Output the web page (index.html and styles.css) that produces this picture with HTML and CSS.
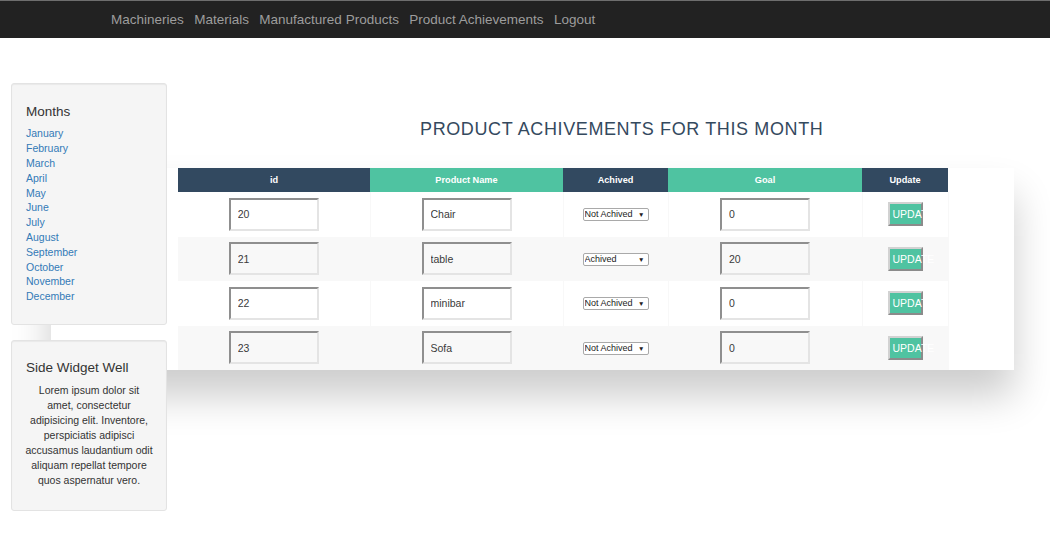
FILE: index.html
```html
<!DOCTYPE html>
<html>
<head>
<meta charset="utf-8">
<title>Product Achievements</title>
<link rel="stylesheet" href="styles.css">
</head>
<body>
<nav class="navbar">
  <ul class="nav">
    <li><a href="#">Machineries</a></li>
    <li><a href="#">Materials</a></li>
    <li><a href="#">Manufactured Products</a></li>
    <li><a href="#">Product Achievements</a></li>
    <li><a href="#">Logout</a></li>
  </ul>
</nav>
<div class="page">
  <aside class="sidebar">
    <div class="well">
      <h4>Months</h4>
      <ul class="months">
        <li><a href="#">January</a></li>
        <li><a href="#">February</a></li>
        <li><a href="#">March</a></li>
        <li><a href="#">April</a></li>
        <li><a href="#">May</a></li>
        <li><a href="#">June</a></li>
        <li><a href="#">July</a></li>
        <li><a href="#">August</a></li>
        <li><a href="#">September</a></li>
        <li><a href="#">October</a></li>
        <li><a href="#">November</a></li>
        <li><a href="#">December</a></li>
      </ul>
    </div>
    <div class="well">
      <h4>Side Widget Well</h4>
      <p>Lorem ipsum dolor sit amet, consectetur adipisicing elit. Inventore, perspiciatis adipisci accusamus laudantium odit aliquam repellat tempore quos aspernatur vero.</p>
    </div>
  </aside>
  <main class="main">
    <h2 class="title">PRODUCT ACHIVEMENTS FOR THIS MONTH</h2>
    <div class="table-wrapper">
      <table class="fl-table">
        <colgroup>
          <col class="c-id"><col class="c-name"><col class="c-ach"><col class="c-goal"><col class="c-upd">
        </colgroup>
        <thead>
          <tr><th>id</th><th>Product Name</th><th>Achived</th><th>Goal</th><th>Update</th></tr>
        </thead>
        <tbody>
          <tr>
            <td><input type="text" value="20"></td>
            <td><input type="text" value="Chair"></td>
            <td><span class="select"><select><option>Not Achived</option><option>Achived</option></select></span></td>
            <td><input type="text" value="0"></td>
            <td><button class="btn">UPDATE</button></td>
          </tr>
          <tr>
            <td><input type="text" value="21"></td>
            <td><input type="text" value="table"></td>
            <td><span class="select"><select><option>Achived</option><option>Not Achived</option></select></span></td>
            <td><input type="text" value="20"></td>
            <td><button class="btn">UPDATE</button></td>
          </tr>
          <tr>
            <td><input type="text" value="22"></td>
            <td><input type="text" value="minibar"></td>
            <td><span class="select"><select><option>Not Achived</option><option>Achived</option></select></span></td>
            <td><input type="text" value="0"></td>
            <td><button class="btn">UPDATE</button></td>
          </tr>
          <tr>
            <td><input type="text" value="23"></td>
            <td><input type="text" value="Sofa"></td>
            <td><span class="select"><select><option>Not Achived</option><option>Achived</option></select></span></td>
            <td><input type="text" value="0"></td>
            <td><button class="btn">UPDATE</button></td>
          </tr>
        </tbody>
      </table>
    </div>
  </main>
</div>
</body>
</html>
```
FILE: styles.css
```css
html, body {
  margin: 0;
  padding: 0;
  background: #ffffff;
}
body {
  font-family: "Liberation Sans", Arial, sans-serif;
  font-size: 10.5px;
  line-height: 15px;
  color: #333333;
}

/* navbar */
.navbar {
  background: #222222;
  border-top: 1px solid #6e6e6e;
  height: 37px;
}
.nav {
  display: flex;
  gap: 10.4px;
  list-style: none;
  margin: 0;
  padding: 0 0 0 111px;
  height: 37px;
  align-items: center;
}
.nav a {
  color: #9d9d9d;
  font-size: 13.5px;
  line-height: 37px;
  text-decoration: none;
}

/* page */
.page {
  display: flex;
  align-items: flex-start;
}
.sidebar {
  flex: none;
  width: 156px;
  margin: 45px 0 0 11px;
  position: relative;
  z-index: 1;
}
.well {
  background: #f5f5f5;
  border: 1px solid #e3e3e3;
  border-radius: 3px;
  padding: 14px;
  margin-bottom: 15px;
  box-shadow: inset 0 1px 1px rgba(0, 0, 0, 0.05);
}
.well h4 {
  font-size: 13.5px;
  font-weight: normal;
  line-height: 14.85px;
  margin: 6.5px 0 7px;
  color: #333333;
}
.months {
  list-style: none;
  padding: 0;
  margin: 0 0 6px;
  line-height: 14.8px;
}
.months a {
  color: #337ab7;
  text-decoration: none;
}
.well p {
  text-align: center;
  margin: 0 -1px 7.5px;
}

/* main */
.main {
  flex: 1;
  min-width: 0;
}
.title {
  margin: 80.5px 0 0 253px;
  font-size: 18px;
  font-weight: normal;
  line-height: 20px;
  letter-spacing: 0.62px;
  color: #34495e;
}
.table-wrapper {
  margin: 29.5px 36px 0 -116px;
  box-shadow: 0 26px 37px rgba(0, 0, 0, 0.2);
}
.fl-table {
  margin-left: 127px;
  width: 770px;
  table-layout: fixed;
  border-collapse: collapse;
  background: #ffffff;
  white-space: nowrap;
  font-size: 10.5px;
}
.c-id { width: 192px; }
.c-name { width: 193px; }
.c-ach { width: 105px; }
.c-goal { width: 194px; }
.c-upd { width: 86px; }

.fl-table th {
  padding: 6px 0;
  line-height: 12px;
  font-size: 9.2px;
  font-weight: bold;
  color: #ffffff;
  background: #4fc3a1;
  text-align: center;
}
.fl-table th:nth-child(odd) {
  background: #324960;
}
.fl-table td {
  padding: 5.75px 0;
  text-align: center;
  vertical-align: middle;
  border-right: 1px solid #f8f8f8;
}
.fl-table tbody tr:nth-child(even) {
  background: #f8f8f8;
}

.fl-table input {
  display: block;
  margin: 0 auto;
  box-sizing: border-box;
  width: 90px;
  height: 33px;
  border: 2px solid;
  border-color: #8f8f8f #e4e4e4 #e4e4e4 #8f8f8f;
  background: transparent;
  padding: 0 0 0 7px;
  font-family: "Liberation Sans", Arial, sans-serif;
  font-size: 10.5px;
  color: #3a3a3a;
  outline: none;
}

.select {
  display: inline-block;
  position: relative;
  width: 66px;
  height: 13px;
  vertical-align: middle;
}
.select select {
  -webkit-appearance: none;
  appearance: none;
  display: block;
  box-sizing: border-box;
  width: 66px;
  height: 13px;
  border: 1px solid #a9a9a9;
  border-radius: 2px;
  background: #ffffff;
  padding: 0 0 0 1px;
  margin: 0;
  font-family: "Liberation Sans", Arial, sans-serif;
  font-size: 9px;
  line-height: 11px;
  color: #222222;
}
.select::after {
  content: "\25BC";
  position: absolute;
  right: 4px;
  top: 0;
  font-size: 6.5px;
  line-height: 13px;
  color: #222222;
  pointer-events: none;
}

.btn {
  display: block;
  margin: 0 auto;
  box-sizing: border-box;
  width: 35px;
  height: 24px;
  background: #4fc3a1;
  border: 2px solid;
  border-color: #d2d2d2 #8b8b8b #8b8b8b #d2d2d2;
  color: #ffffff;
  font-family: "Liberation Sans", Arial, sans-serif;
  font-size: 10.5px;
  padding: 0 0 0 3px;
  text-align: left;
  white-space: nowrap;
  overflow: visible;
}
```
